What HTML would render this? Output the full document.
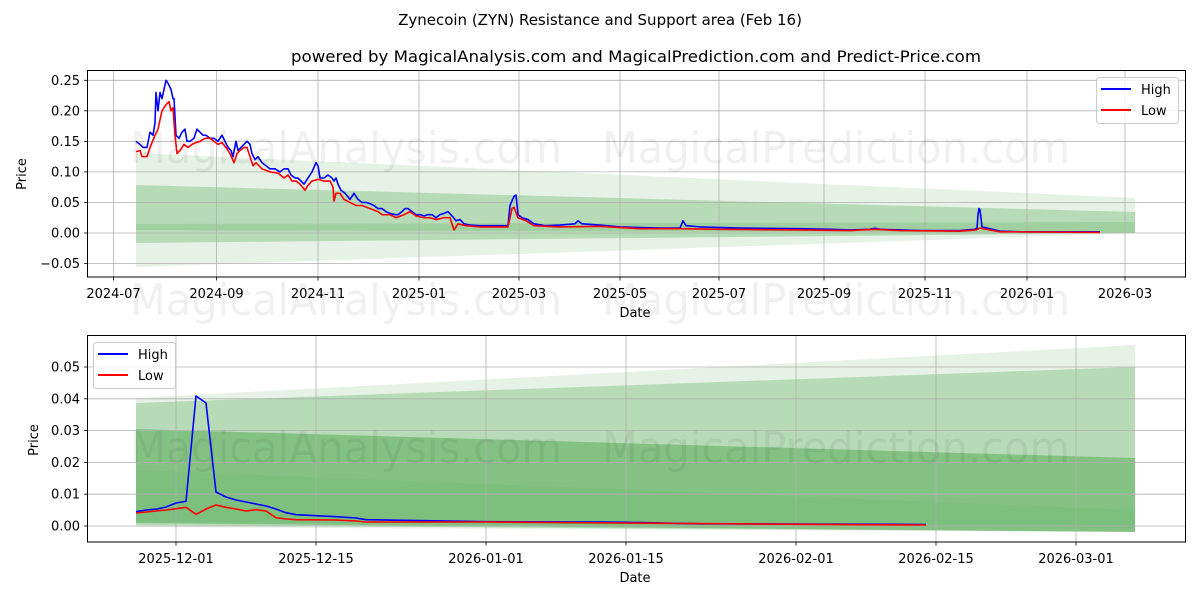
<!DOCTYPE html>
<html><head><meta charset="utf-8"><style>
html,body{margin:0;padding:0;background:#fff;}
svg{display:block;font-family:"DejaVu Sans","Liberation Sans",sans-serif;}
</style></head><body>
<svg width="1200" height="600" viewBox="0 0 1200 600" xmlns="http://www.w3.org/2000/svg">
<rect width="1200" height="600" fill="#fff"/>
<text x="600" y="25" font-size="15" text-anchor="middle" fill="#000">Zynecoin (ZYN) Resistance and Support area (Feb 16)</text>
<text x="291" y="62" font-size="16" textLength="690" lengthAdjust="spacingAndGlyphs" fill="#000">powered by MagicalAnalysis.com and MagicalPrediction.com and Predict-Price.com</text>

<!-- TOP AXES -->
<g>
<polygon points="136,153 1135,198 1135,233 136,267" fill="#008000" fill-opacity="0.1"/>
<polygon points="136,185 1135,212 1135,233 136,243" fill="#008000" fill-opacity="0.2"/>
<polygon points="136,224 1135,222 1135,233 136,230" fill="#008000" fill-opacity="0.12"/>
<g stroke="#b0b0b0" stroke-width="0.8">
<line x1="87" x2="1186" y1="80.3" y2="80.3"/><line x1="87" x2="1186" y1="110.8" y2="110.8"/><line x1="87" x2="1186" y1="141.4" y2="141.4"/><line x1="87" x2="1186" y1="171.9" y2="171.9"/><line x1="87" x2="1186" y1="202.5" y2="202.5"/><line x1="87" x2="1186" y1="233" y2="233"/><line x1="87" x2="1186" y1="263.5" y2="263.5"/>
<line y1="70" y2="277" x1="113.5" x2="113.5"/><line y1="70" y2="277" x1="216.5" x2="216.5"/><line y1="70" y2="277" x1="318" x2="318"/><line y1="70" y2="277" x1="419" x2="419"/><line y1="70" y2="277" x1="519" x2="519"/><line y1="70" y2="277" x1="620" x2="620"/><line y1="70" y2="277" x1="719" x2="719"/><line y1="70" y2="277" x1="824" x2="824"/><line y1="70" y2="277" x1="925" x2="925"/><line y1="70" y2="277" x1="1027" x2="1027"/><line y1="70" y2="277" x1="1125" x2="1125"/>
</g>
<g transform="translate(0,233) scale(1,-611)" fill="none" stroke-linejoin="round">
<polyline vector-effect="non-scaling-stroke" stroke="#0000ff" stroke-width="1.6" points="136,0.150 140,0.145 143,0.14 147,0.14 150,0.165 153,0.16 155,0.18 156,0.23 158,0.20 160,0.23 162,0.22 164,0.235 166,0.25 168,0.245 171,0.235 173,0.22 174,0.22 176,0.16 179,0.155 182,0.165 185,0.17 187,0.15 190,0.15 194,0.155 197,0.17 200,0.165 203,0.16 206,0.16 210,0.155 214,0.155 218,0.15 222,0.16 225,0.15 228,0.14 231,0.135 233,0.125 236,0.15 238,0.135 241,0.14 244,0.145 247,0.15 250,0.145 252,0.13 255,0.12 258,0.125 262,0.115 266,0.11 270,0.105 275,0.105 280,0.1 284,0.105 288,0.105 291,0.095 295,0.09 298,0.09 301,0.085 304,0.08 308,0.09 312,0.1 316,0.115 318,0.11 320,0.09 324,0.09 328,0.095 332,0.09 334,0.085 336,0.09 338,0.08 341,0.07 345,0.065 350,0.055 354,0.065 358,0.055 362,0.05 366,0.05 370,0.048 374,0.045 378,0.04 382,0.04 386,0.035 390,0.032 395,0.03 398,0.03 402,0.035 405,0.04 408,0.04 412,0.035 416,0.03 420,0.03 424,0.028 428,0.03 432,0.03 436,0.025 440,0.03 444,0.032 448,0.035 452,0.028 456,0.02 460,0.022 464,0.015 470,0.013 480,0.012 490,0.012 500,0.012 508,0.012 510,0.045 514,0.06 516,0.062 518,0.03 522,0.025 528,0.022 534,0.015 545,0.012 560,0.013 575,0.015 578,0.02 582,0.015 600,0.013 620,0.01 640,0.009 660,0.008 680,0.008 683,0.02 686,0.012 700,0.01 720,0.009 740,0.008 800,0.007 830,0.006 850,0.005 870,0.006 875,0.008 880,0.006 900,0.005 920,0.004 940,0.004 960,0.004 975,0.006 977,0.008 978,0.03 979,0.04 980,0.038 982,0.01 990,0.007 1000,0.003 1020,0.002 1100,0.002"/>
<polyline vector-effect="non-scaling-stroke" stroke="#ff0000" stroke-width="1.6" points="136,0.133 140,0.135 142,0.125 147,0.125 150,0.14 155,0.16 158,0.17 162,0.2 166,0.21 169,0.215 171,0.2 173,0.205 175,0.16 177,0.13 180,0.135 184,0.145 188,0.14 192,0.145 196,0.148 200,0.15 205,0.155 210,0.155 214,0.15 218,0.145 222,0.148 226,0.14 230,0.13 234,0.115 237,0.13 240,0.135 244,0.14 247,0.14 250,0.125 253,0.11 256,0.115 262,0.105 270,0.1 278,0.098 284,0.09 288,0.095 292,0.085 296,0.085 300,0.08 305,0.07 308,0.078 312,0.085 318,0.088 324,0.085 330,0.085 333,0.075 334,0.052 336,0.065 340,0.065 344,0.055 350,0.05 356,0.045 362,0.045 370,0.04 378,0.035 382,0.03 390,0.03 396,0.025 404,0.03 410,0.035 416,0.028 424,0.025 430,0.025 436,0.022 444,0.025 450,0.025 454,0.005 458,0.015 466,0.012 480,0.01 508,0.01 512,0.04 514,0.042 518,0.025 526,0.02 534,0.012 560,0.01 600,0.011 640,0.007 680,0.007 720,0.006 800,0.005 850,0.004 875,0.006 900,0.004 960,0.003 976,0.005 980,0.008 990,0.005 1000,0.002 1100,0.001"/>
</g>
<g font-size="44" fill="#000" fill-opacity="0.06" lengthAdjust="spacingAndGlyphs">
<text x="130" y="163" textLength="432" lengthAdjust="spacingAndGlyphs">MagicalAnalysis.com</text><text x="602" y="163" textLength="468" lengthAdjust="spacingAndGlyphs">MagicalPrediction.com</text>
<text x="130" y="315" textLength="432" lengthAdjust="spacingAndGlyphs">MagicalAnalysis.com</text><text x="602" y="315" textLength="468" lengthAdjust="spacingAndGlyphs">MagicalPrediction.com</text>
</g>
<rect x="87.5" y="70.5" width="1098" height="206.5" fill="none" stroke="#000" stroke-width="1"/>
<g stroke="#000" stroke-width="0.8">
<line x1="84" x2="87.5" y1="80.3" y2="80.3"/><line x1="84" x2="87.5" y1="110.8" y2="110.8"/><line x1="84" x2="87.5" y1="141.4" y2="141.4"/><line x1="84" x2="87.5" y1="171.9" y2="171.9"/><line x1="84" x2="87.5" y1="202.5" y2="202.5"/><line x1="84" x2="87.5" y1="233" y2="233"/><line x1="84" x2="87.5" y1="263.5" y2="263.5"/>
<line y1="277" y2="280.5" x1="113.5" x2="113.5"/><line y1="277" y2="280.5" x1="216.5" x2="216.5"/><line y1="277" y2="280.5" x1="318" x2="318"/><line y1="277" y2="280.5" x1="419" x2="419"/><line y1="277" y2="280.5" x1="519" x2="519"/><line y1="277" y2="280.5" x1="620" x2="620"/><line y1="277" y2="280.5" x1="719" x2="719"/><line y1="277" y2="280.5" x1="824" x2="824"/><line y1="277" y2="280.5" x1="925" x2="925"/><line y1="277" y2="280.5" x1="1027" x2="1027"/><line y1="277" y2="280.5" x1="1125" x2="1125"/>
</g>
<g font-size="13" text-anchor="end" fill="#000">
<text x="80" y="85">0.25</text><text x="80" y="115.5">0.20</text><text x="80" y="146">0.15</text><text x="80" y="176.5">0.10</text><text x="80" y="207">0.05</text><text x="80" y="237.5">0.00</text><text x="80" y="268">−0.05</text>
</g>
<g font-size="13" text-anchor="middle" fill="#000">
<text x="113.5" y="298">2024-07</text><text x="216.5" y="298">2024-09</text><text x="318" y="298">2024-11</text><text x="419" y="298">2025-01</text><text x="519" y="298">2025-03</text><text x="620" y="298">2025-05</text><text x="719" y="298">2025-07</text><text x="824" y="298">2025-09</text><text x="925" y="298">2025-11</text><text x="1027" y="298">2026-01</text><text x="1125" y="298">2026-03</text>
<text x="635" y="317">Date</text>
<text transform="translate(26,174) rotate(-90)">Price</text>
</g>
<rect x="1096.5" y="77.5" width="82" height="46" rx="3" fill="#fff" fill-opacity="0.8" stroke="#ccc"/>
<line x1="1101" x2="1131" y1="89" y2="89" stroke="#0000ff" stroke-width="2"/>
<line x1="1101" x2="1131" y1="110" y2="110" stroke="#ff0000" stroke-width="2"/>
<text x="1141" y="94" font-size="13">High</text><text x="1141" y="115" font-size="13">Low</text>
</g>

<!-- BOTTOM AXES -->
<g>
<polygon points="136,398 1135,345 1135,532 136,527" fill="#008000" fill-opacity="0.1"/>
<polygon points="136,403 1135,367 1135,532 136,525" fill="#008000" fill-opacity="0.2"/>
<polygon points="136,429 1135,458 1135,532 136,523" fill="#008000" fill-opacity="0.28"/>
<polygon points="136,470 1135,510 1135,528 136,522" fill="#008000" fill-opacity="0.05"/>
<g stroke="#b0b0b0" stroke-width="0.8">
<line x1="87" x2="1186" y1="367" y2="367"/><line x1="87" x2="1186" y1="398.8" y2="398.8"/><line x1="87" x2="1186" y1="430.6" y2="430.6"/><line x1="87" x2="1186" y1="462.4" y2="462.4"/><line x1="87" x2="1186" y1="494.2" y2="494.2"/><line x1="87" x2="1186" y1="526" y2="526"/>
<line y1="335" y2="542" x1="176" x2="176"/><line y1="335" y2="542" x1="316" x2="316"/><line y1="335" y2="542" x1="486" x2="486"/><line y1="335" y2="542" x1="626" x2="626"/><line y1="335" y2="542" x1="796" x2="796"/><line y1="335" y2="542" x1="936" x2="936"/><line y1="335" y2="542" x1="1076" x2="1076"/>
</g>
<polyline fill="none" stroke="#0000ff" stroke-width="1.6" stroke-linejoin="round" points="136,511.7 146,510 157,509 166,507 176,503 186,501.3 196,396 206,403 216,492 226,497 236,500 246,502 256,504 266,506 276,509 286,512.7 296,514.7 316,515.7 336,516.7 356,518 366,519.7 486,521.7 600,522 626,522.3 700,523.8 800,524 926,524.5"/>
<polyline fill="none" stroke="#ff0000" stroke-width="1.6" stroke-linejoin="round" points="136,513 146,512 166,510 176,508.7 186,507.3 196,514.3 206,509 216,505 226,507.3 236,509 246,511 256,509.7 266,511 276,517.7 286,519 296,519.7 336,520 356,521 366,522 486,522 626,523 800,524.3 926,525"/>
<g font-size="44" fill="#000" fill-opacity="0.06">
<text x="130" y="463" textLength="432" lengthAdjust="spacingAndGlyphs">MagicalAnalysis.com</text><text x="602" y="463" textLength="468" lengthAdjust="spacingAndGlyphs">MagicalPrediction.com</text>
</g>
<rect x="87.5" y="335.5" width="1098" height="206.5" fill="none" stroke="#000" stroke-width="1"/>
<g stroke="#000" stroke-width="0.8">
<line x1="84" x2="87.5" y1="367" y2="367"/><line x1="84" x2="87.5" y1="398.8" y2="398.8"/><line x1="84" x2="87.5" y1="430.6" y2="430.6"/><line x1="84" x2="87.5" y1="462.4" y2="462.4"/><line x1="84" x2="87.5" y1="494.2" y2="494.2"/><line x1="84" x2="87.5" y1="526" y2="526"/>
<line y1="542" y2="545.5" x1="176" x2="176"/><line y1="542" y2="545.5" x1="316" x2="316"/><line y1="542" y2="545.5" x1="486" x2="486"/><line y1="542" y2="545.5" x1="626" x2="626"/><line y1="542" y2="545.5" x1="796" x2="796"/><line y1="542" y2="545.5" x1="936" x2="936"/><line y1="542" y2="545.5" x1="1076" x2="1076"/>
</g>
<g font-size="13" text-anchor="end" fill="#000">
<text x="80" y="371.5">0.05</text><text x="80" y="403.3">0.04</text><text x="80" y="435.1">0.03</text><text x="80" y="466.9">0.02</text><text x="80" y="498.7">0.01</text><text x="80" y="530.5">0.00</text>
</g>
<g font-size="13" text-anchor="middle" fill="#000">
<text x="176" y="563">2025-12-01</text><text x="316" y="563">2025-12-15</text><text x="486" y="563">2026-01-01</text><text x="626" y="563">2026-01-15</text><text x="796" y="563">2026-02-01</text><text x="936" y="563">2026-02-15</text><text x="1076" y="563">2026-03-01</text>
<text x="635" y="582">Date</text>
<text transform="translate(38,440) rotate(-90)">Price</text>
</g>
<rect x="93.5" y="342.5" width="82" height="46" rx="3" fill="#fff" fill-opacity="0.8" stroke="#ccc"/>
<line x1="98" x2="128" y1="354" y2="354" stroke="#0000ff" stroke-width="2"/>
<line x1="98" x2="128" y1="375" y2="375" stroke="#ff0000" stroke-width="2"/>
<text x="138" y="359" font-size="13">High</text><text x="138" y="380" font-size="13">Low</text>
</g>
</svg>
</body></html>
